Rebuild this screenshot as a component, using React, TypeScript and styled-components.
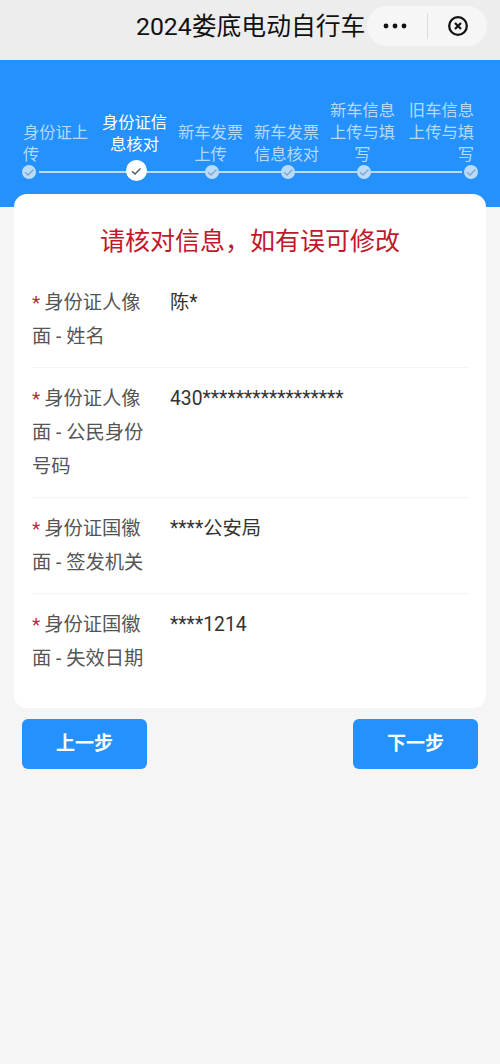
import React from "react";
import styled, { createGlobalStyle } from "styled-components";

const Global = createGlobalStyle`
  html, body { margin: 0; padding: 0; background: #f5f5f5; }
  body { font-family: Roboto, "Noto Sans CJK SC", sans-serif; }
  * { box-sizing: border-box; }
`;

const Page = styled.div`
  width: 500px;
  height: 1064px;
  overflow: hidden;
  position: relative;
  background: #f5f5f5;
`;

const NavBar = styled.header`
  height: 60px;
  background: #ededed;
  padding: 10px 0 0 136px;
  position: relative;
`;

const NavTitle = styled.h1`
  margin: 0;
  font-size: 24.8px;
  line-height: 34px;
  font-weight: 400;
  color: #111;
  white-space: nowrap;
`;

const Capsule = styled.div`
  position: absolute;
  left: 367px;
  top: 6px;
  width: 120px;
  height: 40px;
  border-radius: 20px;
  background: #f6f6f6;
  display: flex;
  align-items: center;
  justify-content: space-between;
  padding: 0 18px 0 16px;
`;

const CapsuleDivider = styled.span`
  width: 1px;
  height: 26px;
  background: #dcdcdc;
`;

const Band = styled.section`
  height: 147px;
  background: #2491fd;
  padding: 0 22px;
`;

const Steps = styled.ol`
  list-style: none;
  margin: 0;
  padding: 0;
  height: 121px;
  display: grid;
  grid-template-columns: repeat(6, 76px);
  position: relative;

  &::before {
    content: "";
    position: absolute;
    left: 17px;
    right: 16px;
    top: 111px;
    height: 2px;
    background: #b9dcfd;
  }
`;

const Step = styled.li<{ $align: string }>`
  display: flex;
  flex-direction: column;
  justify-content: flex-end;
  align-items: ${(p) => p.$align};
  position: relative;
  height: 121px;
`;

const StepText = styled.div<{ $align: string; $active?: boolean }>`
  width: 66px;
  font-size: 16.3px;
  line-height: 22px;
  color: ${(p) => (p.$active ? "#ffffff" : "#b4d9fd")};
  text-align: ${(p) => p.$align};
  margin: ${(p) =>
    p.$align === "left"
      ? "0 0 -1px 1px"
      : p.$align === "right"
      ? "0 4px -1px 0"
      : "0 3px -1px 0"};
  padding-bottom: ${(p) => (p.$active ? "12px" : "0")};
`;

const StepDot = styled.span<{ $active?: boolean }>`
  width: ${(p) => (p.$active ? "21px" : "14px")};
  height: ${(p) => (p.$active ? "21px" : "14px")};
  margin-bottom: ${(p) => (p.$active ? "0" : "2px")};
  margin-top: ${(p) => (p.$active ? "-7px" : "0")};
  border-radius: 50%;
  background: ${(p) => (p.$active ? "#ffffff" : "#b9dcfd")};
  display: flex;
  align-items: center;
  justify-content: center;
  position: relative;
  z-index: 1;
  color: ${(p) => (p.$active ? "#4a5a66" : "#86a6bf")};
`;

const Card = styled.main`
  width: 472px;
  height: 514px;
  margin: -13px 14px 0;
  position: relative;
  background: #ffffff;
  border-radius: 13px;
  padding: 30px 16px 0 18px;
`;

const CardTitle = styled.h2`
  margin: 0 0 12px;
  font-size: 25px;
  line-height: 36px;
  font-weight: 400;
  color: #c2182b;
  text-align: center;
  padding-right: 2px;
`;

const Row = styled.div`
  display: grid;
  grid-template-columns: 120px 1fr;
  column-gap: 18px;
  padding: 14px 0 13px;
  border-bottom: 1px solid #f4f4f4;
  font-size: 19.3px;
  line-height: 34px;

  &:last-child {
    border-bottom: 0;
  }
`;

const Label = styled.div`
  color: #555;
`;

const Star = styled.span`
  color: #b8283c;
  margin-right: 4px;
  font-size: 19px;
`;

const Value = styled.div`
  color: #333;
`;

const Actions = styled.div`
  display: flex;
  justify-content: space-between;
  padding: 11px 22px 0;
`;

const ActionButton = styled.button`
  width: 125px;
  height: 50px;
  border: 0;
  border-radius: 6px;
  background: #2491fd;
  color: #fff;
  font-family: inherit;
  font-size: 19px;
  font-weight: 700;
  padding: 0 0 5px;
`;

const Check = () => (
  <svg width="12" height="12" viewBox="0 0 12 12" fill="none" stroke="currentColor" strokeWidth="1.4">
    <path d="M2 6.2 5 9 10.5 3.5" />
  </svg>
);

const steps = [
  { text: "身份证上传", align: "left", items: "flex-start" },
  { text: "身份证信息核对", align: "center", items: "center", active: true },
  { text: "新车发票上传", align: "center", items: "center" },
  { text: "新车发票信息核对", align: "center", items: "center" },
  { text: "新车信息上传与填写", align: "center", items: "center" },
  { text: "旧车信息上传与填写", align: "right", items: "flex-end" },
];

const rows = [
  { label: "身份证人像面 - 姓名", value: "陈*" },
  { label: "身份证人像面 - 公民身份号码", value: "430*****************" },
  { label: "身份证国徽面 - 签发机关", value: "****公安局" },
  { label: "身份证国徽面 - 失效日期", value: "****1214" },
];

export default function App() {
  return (
    <Page>
      <Global />
      <NavBar>
        <NavTitle>2024娄底电动自行车</NavTitle>
        <Capsule>
          <svg width="24" height="6" viewBox="0 0 24 6" fill="#111">
            <circle cx="3" cy="3" r="2.4" />
            <circle cx="12" cy="3" r="2.4" />
            <circle cx="21" cy="3" r="2.4" />
          </svg>
          <CapsuleDivider />
          <svg width="22" height="22" viewBox="0 0 22 22" fill="none" stroke="#111">
            <circle cx="11" cy="11" r="8.8" strokeWidth="2.3" />
            <path d="M8 8l6 6M14 8l-6 6" strokeWidth="2.2" />
          </svg>
        </Capsule>
      </NavBar>
      <Band>
        <Steps>
          {steps.map((s) => (
            <Step key={s.text} $align={s.items}>
              <StepText $align={s.align} $active={s.active}>
                {s.text}
              </StepText>
              <StepDot $active={s.active}>
                <Check />
              </StepDot>
            </Step>
          ))}
        </Steps>
      </Band>
      <Card>
        <CardTitle>请核对信息，如有误可修改</CardTitle>
        {rows.map((r) => (
          <Row key={r.label}>
            <Label>
              <Star>*</Star>
              {r.label}
            </Label>
            <Value>{r.value}</Value>
          </Row>
        ))}
      </Card>
      <Actions>
        <ActionButton>上一步</ActionButton>
        <ActionButton>下一步</ActionButton>
      </Actions>
    </Page>
  );
}
